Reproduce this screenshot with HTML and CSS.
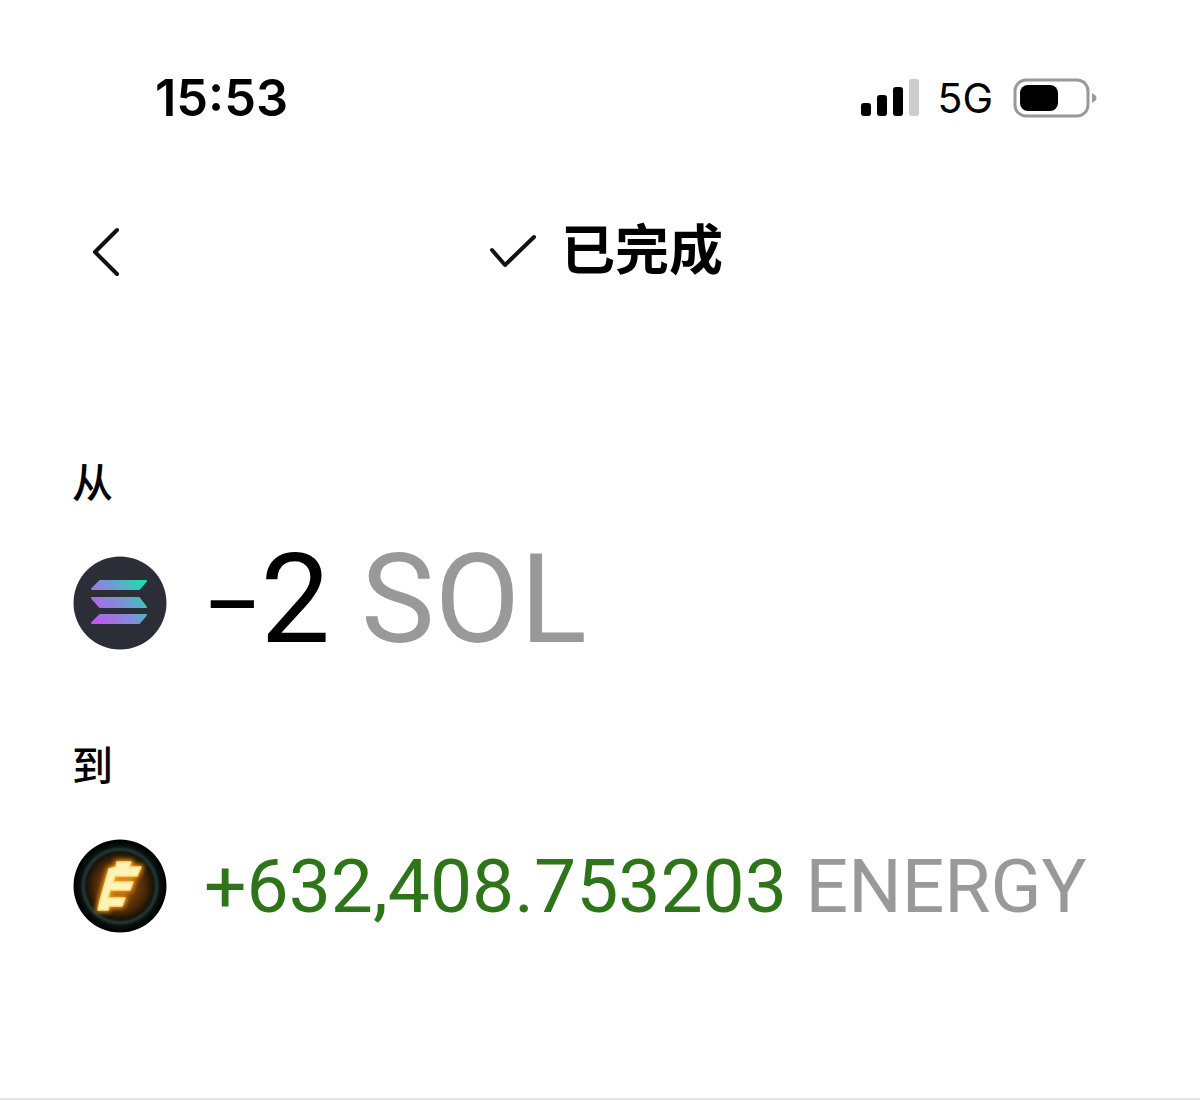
FILE: index.html
```html
<!DOCTYPE html>
<html lang="zh-CN">
<head>
    <meta charset="UTF-8">
    <title>已完成</title>
    <link rel="stylesheet" href="styles.css">
</head>
<body>
    <div class="page">
        <div class="status">
            <span class="time">15:53</span>
            <div class="status-right">
                <svg class="signal" width="60" height="38" viewBox="0 0 60 38">
                    <rect x="2" y="24" width="10" height="13" rx="3" fill="#000"/>
                    <rect x="18" y="16" width="10" height="21" rx="3" fill="#000"/>
                    <rect x="34" y="8" width="10" height="29" rx="3" fill="#000"/>
                    <rect x="50" y="0" width="10" height="37" rx="3" fill="#ccc"/>
                </svg>
                <span class="net">5G</span>
                <svg class="battery" width="84" height="40" viewBox="0 0 84 40">
                    <rect x="2" y="2" width="73" height="36" rx="11" fill="#fff" stroke="#999" stroke-width="3"/>
                    <rect x="7" y="7" width="38" height="26" rx="8" fill="#000"/>
                    <path d="M79 15 L83 18 Q84 20 83 22 L79 25 Z" fill="#999"/>
                </svg>
            </div>
        </div>

        <div class="nav">
            <svg class="back" width="32" height="50" viewBox="0 0 32 50">
                <path d="M26 3 L4 25 L26 47" fill="none" stroke="#111" stroke-width="4" stroke-linecap="round" stroke-linejoin="round"/>
            </svg>
            <div class="title">
                <svg width="50" height="36" viewBox="0 0 50 36">
                    <path d="M3 16 L16 31 L45 3" fill="none" stroke="#111" stroke-width="4" stroke-linecap="round" stroke-linejoin="round"/>
                </svg>
                <span>已完成</span>
            </div>
        </div>

        <div class="label from">从</div>
        <div class="row">
            <svg class="coin" width="94" height="94" viewBox="0 0 94 94">
                <defs>
                    <linearGradient id="sol" x1="18" y1="68" x2="74" y2="24" gradientUnits="userSpaceOnUse">
                        <stop offset="0" stop-color="#c94ff0"/>
                        <stop offset="0.5" stop-color="#7f8fd8"/>
                        <stop offset="1" stop-color="#12e8a8"/>
                    </linearGradient>
                </defs>
                <circle cx="47" cy="47" r="46.5" fill="#2b2e37"/>
                <path d="M27 25 H73 L66 33 H19 Z M19 42 H66 L73 51 H27 Z M27 59 H73 L66 67 H19 Z" fill="url(#sol)" stroke="url(#sol)" stroke-width="2" stroke-linejoin="round"/>
            </svg>
            <span class="amount big"><span class="minus">−</span>2 <span class="unit">SOL</span></span>
        </div>

        <div class="label to">到</div>
        <div class="row">
            <svg class="coin" width="94" height="94" viewBox="0 0 94 94">
                <defs>
                    <radialGradient id="glow" cx="50%" cy="50%" r="50%">
                        <stop offset="0" stop-color="#a85c0c"/>
                        <stop offset="0.55" stop-color="#4a2708"/>
                        <stop offset="0.72" stop-color="#1a1208"/>
                        <stop offset="0.79" stop-color="#1f3a35"/>
                        <stop offset="0.86" stop-color="#0a0f10"/>
                        <stop offset="1" stop-color="#000"/>
                    </radialGradient>
                    <filter id="blur" x="-40%" y="-40%" width="180%" height="180%">
                        <feGaussianBlur stdDeviation="2.5"/>
                    </filter>
                </defs>
                <circle cx="47" cy="47" r="46.5" fill="url(#glow)"/>
                <path d="M44 23 H58 L56 28 H68 L64 37 H42 L40 43 H60 L57 51 H37 L35 59 H52 L49 67 H36 L35 71 H25 L27 62 L36 30 L43 28 Z" fill="#ffa414" stroke="#ffa414" stroke-width="4" filter="url(#blur)"/>
                <path d="M44 23 H58 L56 28 H68 L64 37 H42 L40 43 H60 L57 51 H37 L35 59 H52 L49 67 H36 L35 71 H25 L27 62 L36 30 L43 28 Z" fill="#fff3b8" stroke="#ffe08a" stroke-width="1.5" stroke-linejoin="round"/>
            </svg>
            <span class="amount green">+632,408.753203 <span class="unit">ENERGY</span></span>
        </div>
    </div>
</body>
</html>
```
FILE: styles.css
```css
* {
    box-sizing: border-box;
}
html, body {
    margin: 0;
    padding: 0;
    background: #fff;
}
body {
    font-family: Roboto, "Noto Sans CJK SC", sans-serif;
    color: #000;
}
.page {
    height: 1100px;
    border-bottom: 2px solid #e4e4e4;
    padding: 0 73px;
    overflow: hidden;
}
.status {
    display: flex;
    justify-content: space-between;
    align-items: center;
    height: 40px;
    margin-top: 78px;
    padding-left: 82px;
    padding-right: 30px;
}
.time {
    font-family: Inter, sans-serif;
    font-size: 50.5px;
    font-weight: 600;
    line-height: 40px;
}
.status-right {
    display: flex;
    align-items: center;
    gap: 20px;
}
.signal {
    margin-right: -2px;
}
.net {
    font-family: Inter, sans-serif;
    font-size: 41px;
    line-height: 40px;
}
.nav {
    display: flex;
    align-items: center;
    height: 60px;
    margin-top: 104px;
    padding-left: 18px;
}
.title {
    display: flex;
    align-items: center;
    gap: 22px;
    margin-left: 366px;
}
.title span {
    font-size: 54px;
    font-weight: 700;
    line-height: 60px;
}
.label {
    font-size: 41px;
    line-height: 44px;
    font-weight: 500;
    margin-left: -1px;
}
.from {
    margin-top: 180px;
}
.to {
    margin-top: 95px;
}
.row {
    display: flex;
    align-items: center;
    gap: 35px;
    height: 94px;
    margin-top: 50px;
}
.coin {
    flex: none;
}
.amount {
    font-size: 75px;
    line-height: 94px;
    white-space: nowrap;
}
.big {
    font-size: 124px;
    font-weight: 400;
}
.minus {
    letter-spacing: -2px;
    font-size: 106px;
}
.green {
    color: #2e7418;
    margin-left: 2px;
}
.unit {
    color: #999;
}
```
